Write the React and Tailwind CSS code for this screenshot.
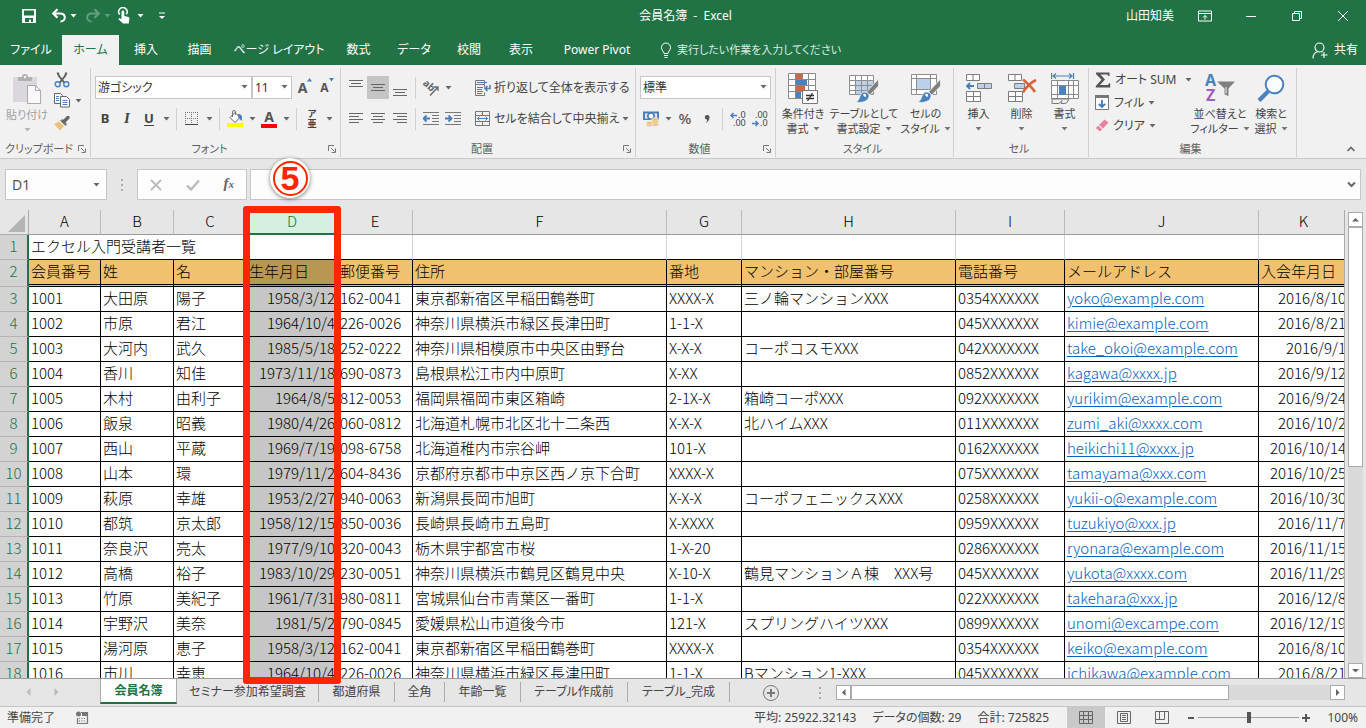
import React from "react";

const UI = "font-['Noto_Sans','Noto_Sans_CJK_JP',sans-serif] [font-feature-settings:'palt']";

/* ---------- small shared parts ---------- */

function Caret({ className = "text-[#666]" }) {
  return (
    <svg width="7" height="4" viewBox="0 0 7 4" className={className} aria-hidden="true">
      <path d="M0.5 0h6L3.5 3.5z" fill="currentColor" />
    </svg>
  );
}

function CaretButton({ label, className }) {
  return (
    <button type="button" aria-label={label} className="flex h-[23px] w-3 items-center justify-center">
      <Caret className={className} />
    </button>
  );
}

function Tool({ label, children, active }) {
  return (
    <button
      type="button"
      aria-label={label}
      className={`flex h-[23px] w-[22px] shrink-0 items-center justify-center ${active ? "bg-[#c5c5c5]" : ""}`}
    >
      {children}
    </button>
  );
}

function Sep() {
  return <div className="mx-1 h-[22px] w-px shrink-0 bg-[#d0d0d0]" />;
}

function Group({ title, launcher, width, children }) {
  return (
    <section aria-label={title} className={`flex shrink-0 flex-col border-r border-[#d0d0d0] ${width}`}>
      <div className="min-h-0 flex-1">{children}</div>
      <div className="flex h-4 items-center pr-1">
        <span className="flex-1 whitespace-nowrap text-center text-[11px] leading-4 text-[#5e5e5e]">{title}</span>
        {launcher && (
          <button type="button" aria-label={`${title}の設定`}>
            <svg width="8" height="8" viewBox="0 0 8 8" fill="none" stroke="#777">
              <path d="M0.5 6V0.5H6M3 3l3.5 3.5M7.5 3.5v4h-4" />
            </svg>
          </button>
        )}
      </div>
    </section>
  );
}

function DropSelect({ label, value, width }) {
  return (
    <div className={`relative flex h-[23px] ${width}`}>
      <select aria-label={label} defaultValue={value} className="w-full appearance-none border border-[#c6c6c6] bg-white pl-[2px] text-xs text-[#333]">
        <option>{value}</option>
      </select>
      <span className="pointer-events-none absolute right-1 top-[9px]">
        <Caret />
      </span>
    </div>
  );
}

function BigButton({ icon, lines, width, muted }) {
  return (
    <button type="button" className={`flex shrink-0 flex-col items-center text-[11px] leading-[15px] ${muted ? "text-[#a0a0a0]" : "text-[#444]"} ${width}`}>
      <span className="flex h-9 items-center">{icon}</span>
      <span className="whitespace-nowrap">{lines[0]}</span>
      <span className="flex h-[15px] items-center gap-1 whitespace-nowrap">
        {lines[1]}
        <Caret className={muted ? "text-[#b5b5b5]" : "text-[#777]"} />
      </span>
    </button>
  );
}

/* ---------- icons ---------- */

function Lines({ rows }) {
  return (
    <svg width="16" height="16" viewBox="0 0 16 16" stroke="#666">
      {rows.map(([y, a, b]) => (
        <path key={y} d={`M${a} ${y}.5H${b}`} />
      ))}
    </svg>
  );
}

const SaveIcon = () => (
  <svg width="16" height="16" viewBox="0 0 16 16">
    <path d="M1 1h14v14H1z" fill="#fff" />
    <path d="M3 2.500h10v5H3zM4 10h8v4H10v-2.500H8V14H4z" fill="#217346" />
  </svg>
);

const UndoIcon = ({ flip }) => (
  <svg width="16" height="16" viewBox="0 0 16 16" className={flip ? "-scale-x-100 opacity-30" : ""}>
    <path d="M2.500 5.500H9c3 0 4.800 1.700 4.800 4s-1.800 4-4.300 4" fill="none" stroke="#fff" strokeWidth="2" />
    <path d="M6.500 1.200L2.200 5.500l4.300 4.300" fill="none" stroke="#fff" strokeWidth="2.200" />
  </svg>
);

const TouchIcon = () => (
  <svg width="14" height="18" viewBox="0 0 14 18">
    <path d="M2.700 7.500A4.200 4.200 0 1 1 9.300 7.300" fill="none" stroke="#fff" strokeWidth="1.500" />
    <path d="M4.500 5a1.400 1.400 0 0 1 2.800 0v4l4.200 1c.8.2 1 .8.9 1.600l-.6 4.900H6L1.200 12c.7-1.100 1.800-1 3.300.2z" fill="#fff" />
  </svg>
);

const PasteIcon = () => (
  <svg width="30" height="32" viewBox="0 0 30 32">
    <path d="M1 4h24v25H1z" fill="#dcd7de" />
    <path d="M6 8V4h4a3 3 0 0 1 6 0h4v4z" fill="#b0b0b0" />
    <circle cx="13" cy="4" r="1.300" fill="#f1f1f1" />
    <path d="M15.500 12.500h8l5 5v13h-13z" fill="#fbf8fc" stroke="#aaa" />
    <path d="M23.500 12.500v5h5" fill="none" stroke="#aaa" />
  </svg>
);

const CutIcon = () => (
  <svg width="16" height="16" viewBox="0 0 16 16" fill="none">
    <path d="M3.500 0.500L5 4l5.500 7M12.500 0.500L11 4l-5.500 7" stroke="#606060" strokeWidth="2" />
    <circle cx="3.700" cy="12.300" r="2.500" stroke="#4a7ebb" strokeWidth="1.400" />
    <circle cx="12.300" cy="12.300" r="2.500" stroke="#4a7ebb" strokeWidth="1.400" />
  </svg>
);

const CopyIcon = () => (
  <svg width="16" height="15" viewBox="0 0 16 15" fill="#fff" stroke="#666">
    <path d="M0.500 0.500h6l2 2v8h-8z" />
    <path d="M6.500 3.500h6l3 3v7.500h-9z" />
    <path d="M2 3.500h3M2 5.500h3M2 7.500h3M8.500 7.500h5M8.500 9.500h5M8.500 11.500h5" stroke="#4a7ebb" />
  </svg>
);

const BrushIcon = () => (
  <svg width="16" height="15" viewBox="0 0 16 15">
    <path d="M0 8l5-2.500L10 10l-4 4.500z" fill="#ecc17c" />
    <path d="M6 4.500l5.500 5.500 1.500-2L8.500 3z" fill="#777" />
    <path d="M10 5.500L14 1.500" stroke="#666" strokeWidth="3.400" strokeLinecap="round" />
  </svg>
);

const BordersIcon = () => (
  <svg width="14" height="14" viewBox="0 0 14 14" fill="none" stroke="#777">
    <path d="M0.500 0v12M6.500 0v12M12.500 0v12M0 0.500h13M0 6.500h13" strokeDasharray="1 1" />
    <path d="M0 12.500h13" stroke="#444" />
  </svg>
);

const FillIcon = () => (
  <svg width="18" height="17" viewBox="0 0 18 17">
    <path d="M4 7.500L9 2.500l5 5-5 5z" fill="#fff" stroke="#666" />
    <path d="M6.500 7V2a1.500 1.500 0 0 1 3 0v3" fill="none" stroke="#777" />
    <path d="M12 4c3.500 0 5 2.500 3.500 7-1.500-1-2-3-3.500-4z" fill="#4a7ebb" />
    <path d="M1 13h16v4H1z" fill="#ff0" />
  </svg>
);

const FontColorIcon = () => (
  <span className="flex flex-col items-center">
    <span className="text-sm font-bold leading-[14px] text-[#555]">A</span>
    <span className="h-1 w-4 bg-[#f00]" />
  </span>
);

const GrowIcon = ({ down }) => (
  <span className="flex items-start">
    <span className={`font-bold text-[#555] ${down ? "text-xs" : "text-sm"} leading-5`}>A</span>
    <svg width="5" height="4" viewBox="0 0 5 4">
      <path d={down ? "M0 0h5L2.500 3.500z" : "M0 3.500h5L2.500 0z"} fill="#4a7ebb" />
    </svg>
  </span>
);

const OrientIcon = () => (
  <svg width="18" height="18" viewBox="0 0 18 18">
    <text x="0" y="8" transform="rotate(42 4 7)" fontSize="10" fontWeight="bold" fill="#666" fontFamily="Noto Sans, sans-serif">
      ab
    </text>
    <path d="M8 16.500L16 8M12 8h4v4" stroke="#666" strokeWidth="1.300" fill="none" />
  </svg>
);

const IndentIcon = ({ inc }) => (
  <svg width="16" height="14" viewBox="0 0 16 14" fill="none" stroke="#777">
    <path d="M0 0.500h16M9 3.500h7M9 6.500h7M9 9.500h7M0 12.500h16" />
    <path d={inc ? "M0 6.500h6M3.500 3.500l3 3-3 3" : "M1 6.500h6M3.500 3.500l-3 3 3 3"} stroke="#4a7ebb" strokeWidth="1.800" />
  </svg>
);

const WrapIcon = () => (
  <svg width="16" height="16" viewBox="0 0 16 16" fill="none" stroke="#777">
    <path d="M0.500 0.500h9v4h-9zM0.500 4.500v11h9v-3M9.500 4.500v3" />
    <path d="M2 2.500h10M2 7.500h6M2 9.500h5M2 11.500h6M2 13.500h5" stroke="#4a7ebb" />
    <path d="M15 5v3.500h-5M12.500 6l-2.500 2.500 2.500 2.500" stroke="#4a7ebb" strokeWidth="1.500" />
  </svg>
);

const MergeIcon = () => (
  <svg width="16" height="16" viewBox="0 0 16 16" fill="none" stroke="#777">
    <path d="M0.500 0.500h14v14h-14zM0.500 4.500h14M0.500 10.500h14M7.500 0.500v4M7.500 10.500v4" />
    <path d="M2.500 7.500h10M4.500 5.500l-2 2 2 2M10.500 5.500l2 2-2 2" stroke="#4a7ebb" />
  </svg>
);

const CurrencyIcon = () => (
  <svg width="16" height="16" viewBox="0 0 16 16">
    <path d="M0 0.500h16v8.500H0z" fill="#4a7ebb" />
    <path d="M2 2.500h3L3.500 5 5 7.500H2zM14 2.500h-3L12.500 5 11 7.500h3z" fill="#e8eef7" />
    <circle cx="8" cy="5" r="2.300" fill="#fff" />
    <g fill="#ecc17c" stroke="#f1f1f1" strokeWidth="0.600">
      <ellipse cx="12" cy="13.500" rx="3.700" ry="1.800" />
      <ellipse cx="12" cy="11" rx="3.700" ry="1.800" />
      <ellipse cx="12" cy="8.500" rx="3.700" ry="1.800" />
      <ellipse cx="6.500" cy="14" rx="3.300" ry="1.500" />
      <ellipse cx="6.500" cy="11.800" rx="3.300" ry="1.500" />
    </g>
  </svg>
);

const DecimalIcon = ({ dec }) => (
  <svg width="17" height="16" viewBox="0 0 17 16" fontSize="9" fill="#444" fontFamily="Noto Sans, sans-serif">
    <text x={dec ? 3 : 8} y="7">{dec ? ".00" : ".0"}</text>
    <text x={dec ? 8 : 3} y="15">{dec ? ".0" : ".00"}</text>
    <path
      d={dec ? "M0 12.500h6M3.500 10l2.500 2.500L3.500 15" : "M1 4.500h6M3.500 2L1 4.500 3.500 7"}
      fill="none"
      stroke="#4a7ebb"
      strokeWidth="1.500"
    />
  </svg>
);

const CondIcon = () => (
  <svg width="30" height="31" viewBox="0 0 30 31">
    <path d="M0.500 0.500h27v25h-27z" fill="#fff" />
    <path d="M8 1h6v6H8zM8 13h9v6H8z" fill="#d9623f" />
    <path d="M8 7h11v6H8zM8 19h5v6H8z" fill="#4a82bd" />
    <path d="M0.500 0.500h27v25h-27zM7.500 0.500v25M20.500 0.500v25M0.500 6.500h27M0.500 12.500h27M0.500 18.500h27M14.500 0.500v6" fill="none" stroke="#8a8a8a" />
    <path d="M14.500 17.500h15v13h-15z" fill="#fff" stroke="#777" />
    <path d="M18 22.500h8M18 25.500h8M24.500 20l-5 8" stroke="#333" strokeWidth="1.300" />
  </svg>
);

const Brush = () => (
  <g>
    <path d="M29.500 6v7L21 22l-3.500-3z" fill="#7f7f7f" stroke="#f1f1f1" strokeWidth="0.800" />
    <path d="M7 29c4-1.500 3-7 6.500-9.500 3-1.500 7 .5 6.500 4C19.500 28 13 30.500 7 29z" fill="#4a82bd" stroke="#f1f1f1" strokeWidth="0.800" />
    <path d="M14 21.500c1.500-1.500 3.500-.5 3 1.500-.5 1.500-2 1-3-1.500z" fill="#fff" />
  </g>
);

const TableFmtIcon = () => (
  <svg width="30" height="30" viewBox="0 0 30 30">
    <path d="M0.500 2.500h24v19h-24z" fill="#fff" />
    <path d="M7 8h17.500v13.500H7z" fill="#bdd0e9" />
    <path d="M0.500 2.500h24v19h-24zM6.500 2.500v19M12.500 2.500v19M18.500 2.500v19M0.500 7.500h24M0.500 12.500h24M0.500 17.500h24" fill="none" stroke="#8e8e8e" />
    <Brush />
  </svg>
);

const CellStyleIcon = () => (
  <svg width="30" height="30" viewBox="0 0 30 30">
    <path d="M0.500 1.500h25v20h-25z" fill="#fff" />
    <path d="M6 6h13v10H6z" fill="#bdd0e9" />
    <path d="M0.500 1.500h25v20h-25zM5.500 1.500v20M19.500 1.500v20M0.500 5.500h25M0.500 16.500h25" fill="none" stroke="#8e8e8e" />
    <Brush />
  </svg>
);

const InsertIcon = () => (
  <svg width="28" height="29" viewBox="0 0 28 29" fill="#fff" stroke="#7d7d7d">
    <path d="M1.500 0.500h13v6h-13zM8 0.500v6M1.500 17.500h14v10h-14zM8.500 17.500v10M1.500 22.500h14" />
    <path d="M12.500 9.500h14v5h-14zM19.500 9.500v5" fill="#bdd0e9" />
    <path d="M2 12h7M5 9l-3 3 3 3" fill="none" stroke="#4a7ebb" strokeWidth="1.800" />
  </svg>
);

const DeleteIcon = () => (
  <svg width="30" height="29" viewBox="0 0 30 29" fill="#fff" stroke="#7d7d7d">
    <path d="M1.500 0.500h13v6h-13zM8 0.500v6M1.500 17.500h14v10h-14zM8.500 17.500v10M1.500 22.500h14" />
    <path d="M7.500 9.500h10v5h-10z" fill="#bdd0e9" />
    <path d="M16 5.500C20 9 25 13 28 18M29 6C23 9 19 13 16 18.500" fill="none" stroke="#d9623f" strokeWidth="2.600" />
  </svg>
);

const FormatIcon = () => (
  <svg width="28" height="31" viewBox="0 0 28 31">
    <path d="M0.500 0v6M22.500 0v6M2 3h19M5 0.500L2 3l3 2.500M18 0.500L21 3l-3 2.500" fill="none" stroke="#4a7ebb" strokeWidth="1.200" />
    <path d="M0.500 7.500h27v18h-27z" fill="#fff" />
    <path d="M0.500 7.500h27v18h-27zM6.500 7.500v18M17.500 7.500v18M22.500 7.500v18M0.500 12.500h27M0.500 21.500h27" fill="none" stroke="#8a8a8a" />
    <path d="M8 13h7v9H8z" fill="#4a82bd" />
    <path d="M1 30.500V26h17l-2 3.500q-1 1-3 1h-3l1-3-2 2q-1 1-2 1z" fill="#f1f1f1" stroke="#777" />
  </svg>
);

const SumIcon = () => (
  <svg width="16" height="16" viewBox="0 0 16 16">
    <path d="M1 0.500h13.500V4h-1.200L12.500 2.500H5.500L10 7.500l-5 5.500h8l1-1.800h1.200V15.500H0.800V14l5.700-6.300L1 2z" fill="#555" />
  </svg>
);

const DownBoxIcon = () => (
  <svg width="15" height="16" viewBox="0 0 15 16">
    <path d="M0.500 0.500h13v14h-13z" fill="#fff" stroke="#777" />
    <path d="M0 0h14v3H0z" fill="#777" />
    <path d="M7 5v7M3.800 8.800L7 12l3.200-3.200" fill="none" stroke="#3c78bb" strokeWidth="1.800" />
  </svg>
);

const EraserIcon = () => (
  <svg width="14" height="13" viewBox="0 0 14 13">
    <path d="M4 6L9.500 0.500 13.500 3.500 8 9.500z" fill="#e8839b" />
    <path d="M3.200 6.800L7.200 10.300 5 12.500 0.800 9z" fill="#e8839b" />
  </svg>
);

const SortIcon = () => (
  <svg width="30" height="30" viewBox="0 0 30 30" fontWeight="bold" fontSize="16" fontFamily="Noto Sans, sans-serif">
    <text x="0" y="13" fill="#4a82bd">A</text>
    <text x="1" y="28" fill="#9a5fbf">Z</text>
    <path d="M12 8.500h18l-6.500 7v7.500l-4-1.500v-6z" fill="#808080" />
    <path d="M21 14v6.500" stroke="#f1f1f1" />
  </svg>
);

const FindIcon = () => (
  <svg width="28" height="29" viewBox="0 0 28 29" fill="none">
    <path d="M11 17.500L2 26.500" stroke="#4a82bd" strokeWidth="4.200" />
    <circle cx="17.500" cy="10.500" r="8.800" fill="#fcfcfc" stroke="#4a82bd" strokeWidth="2" />
  </svg>
);

/* ---------- window chrome ---------- */

function TitleBar() {
  return (
    <header className="flex h-[35px] shrink-0 items-center bg-[#217346] pb-1 text-xs text-white">
      <div className="flex flex-1 items-center pl-[21px]">
        <button type="button" aria-label="上書き保存"><SaveIcon /></button>
        <button type="button" aria-label="元に戻す" className="ml-[14px]"><UndoIcon /></button>
        <CaretButton label="元に戻す一覧" className="text-white" />
        <button type="button" aria-label="やり直し" className="ml-[6px]"><UndoIcon flip /></button>
        <CaretButton label="やり直し一覧" className="text-white/30" />
        <button type="button" aria-label="タッチ/マウス モード" className="ml-1"><TouchIcon /></button>
        <span className="ml-[3px] flex"><CaretButton label="モードの選択" className="text-white" /></span>
        <button type="button" aria-label="クイック アクセスのカスタマイズ" className="ml-3">
          <svg width="8" height="8" viewBox="0 0 8 8" fill="#fff"><path d="M1 0.500h6v1H1zM1 4h6L4 7z" /></svg>
        </button>
      </div>
      <h1>会員名簿&nbsp;&nbsp;-&nbsp;&nbsp;Excel</h1>
      <div className="flex flex-1 items-center justify-end gap-8 pr-4">
        <span className="-mr-2">山田知美</span>
        <button type="button" aria-label="リボンの表示オプション">
          <svg width="14" height="12" viewBox="0 0 14 12" fill="none" stroke="#fff"><path d="M0.500 1h13v10h-13zM0.500 3.500h13M7 9.500V5.500M5 7.500l2-2 2 2" /></svg>
        </button>
        <button type="button" aria-label="最小化">
          <svg width="14" height="12" viewBox="0 0 14 12" stroke="#fff"><path d="M2 6.500h10" /></svg>
        </button>
        <button type="button" aria-label="元に戻す(縮小)">
          <svg width="14" height="12" viewBox="0 0 14 12" fill="none" stroke="#fff"><path d="M2.500 3.500h7v7h-7zM4.500 3.500v-2h7v7h-2" /></svg>
        </button>
        <button type="button" aria-label="閉じる">
          <svg width="14" height="12" viewBox="0 0 14 12" stroke="#fff"><path d="M2 1l10 10M12 1L2 11" /></svg>
        </button>
      </div>
    </header>
  );
}

const TABS = [
  ["ファイル", "w-[62px]"],
  ["ホーム", "w-[57px]"],
  ["挿入", "w-[54px]"],
  ["描画", "w-[53px]"],
  ["ページ レイアウト", "w-[106px]"],
  ["数式", "w-[53px]"],
  ["データ", "w-[58px]"],
  ["校閲", "w-[52px]"],
  ["表示", "w-[52px]"],
  ["Power Pivot", "w-[100px]"],
];

function TabBar() {
  return (
    <nav className="flex h-[30px] shrink-0 items-stretch bg-[#217346] text-xs text-white">
      {TABS.map(([name, width]) => (
        <button key={name} type="button" className={`shrink-0 whitespace-nowrap ${width} ${name === "ホーム" ? "bg-[#f1f1f1] text-[#217346]" : ""}`}>
          {name}
        </button>
      ))}
      <button type="button" className="ml-3 flex items-center gap-1 whitespace-nowrap text-[11px] text-[#dcebe2]">
        <svg width="14" height="16" viewBox="0 0 14 16" fill="none" stroke="#fff">
          <path d="M5 11.500c0-2-2.500-3-2.500-6a4.500 4.500 0 0 1 9 0c0 3-2.500 4-2.500 6zM5 13.500h4M5.500 15.500h3" />
        </svg>
        実行したい作業を入力してください
      </button>
      <button type="button" className="ml-auto flex items-center gap-[6px] pr-2">
        <svg width="16" height="17" viewBox="0 0 16 17" fill="none" stroke="#fff" strokeWidth="1.100">
          <circle cx="7.500" cy="5.500" r="4.500" />
          <path d="M1 16.500c0-4 2-6 4.500-6.700M9.500 9.500l1 .8M12 10v6M9 13h6.500" />
        </svg>
        共有
      </button>
    </nav>
  );
}

function Ribbon() {
  return (
    <div className="flex h-[94px] shrink-0 border-b border-[#c8c8c8] bg-[#f1f1f1] pb-px pt-[3px]">
      <Group title="クリップボード" launcher width="w-[91px]">
        <div className="flex pl-[2px] pt-[3px]">
          <BigButton icon={<PasteIcon />} lines={["貼り付け", ""]} width="w-[50px]" muted />
          <div className="flex flex-col items-start pl-[2px]">
            <button type="button" aria-label="切り取り" className="flex h-[18px] items-center"><CutIcon /></button>
            <div className="flex items-center">
              <button type="button" aria-label="コピー" className="mr-[2px]"><CopyIcon /></button>
              <CaretButton label="コピーのオプション" />
            </div>
            <button type="button" aria-label="書式のコピー/貼り付け" className="flex h-[22px] items-center"><BrushIcon /></button>
          </div>
        </div>
      </Group>

      <Group title="フォント" launcher width="w-[250px]">
        <div className="flex flex-col gap-2 pl-[3px] pt-2">
          <div className="flex pl-px">
            <DropSelect label="フォント" value="游ゴシック" width="w-[157px]" />
            <DropSelect label="フォント サイズ" value="11" width="w-[40px]" />
            <span className="ml-[2px] flex">
              <Tool label="フォント サイズの拡大"><GrowIcon /></Tool>
              <Tool label="フォント サイズの縮小"><GrowIcon down /></Tool>
            </span>
          </div>
          <div className="flex items-center text-[13px] text-[#444]">
            <Tool label="太字"><b>B</b></Tool>
            <Tool label="斜体"><span className="font-['Liberation_Serif',serif] text-[15px] font-bold italic">I</span></Tool>
            <Tool label="下線"><b className="underline underline-offset-2">U</b></Tool>
            <CaretButton label="下線の種類" />
            <Sep />
            <Tool label="罫線"><BordersIcon /></Tool>
            <CaretButton label="罫線の種類" />
            <Sep />
            <Tool label="塗りつぶしの色"><FillIcon /></Tool>
            <CaretButton label="塗りつぶしの色の選択" />
            <Tool label="フォントの色"><FontColorIcon /></Tool>
            <CaretButton label="フォントの色の選択" />
            <Sep />
            <Tool label="ふりがなの表示/非表示">
              <span className="flex flex-col items-center text-[9px] font-bold leading-[10px]">
                <span>ア</span>
                <span>亜</span>
              </span>
            </Tool>
            <CaretButton label="ふりがなの設定" />
          </div>
        </div>
      </Group>

      <Group title="配置" launcher width="w-[295px]">
        <div className="flex pl-1 pt-2">
          <div className="flex flex-col gap-2">
            <div className="flex items-center">
              <Tool label="上揃え"><Lines rows={[[0, 1, 15], [3, 3, 13], [6, 1, 15]]} /></Tool>
              <Tool label="上下中央揃え" active><Lines rows={[[4, 1, 15], [7, 3, 13], [10, 1, 15]]} /></Tool>
              <Tool label="下揃え"><Lines rows={[[9, 1, 15], [12, 3, 13], [15, 1, 15]]} /></Tool>
              <Sep />
              <Tool label="方向"><OrientIcon /></Tool>
              <CaretButton label="方向の選択" />
            </div>
            <div className="flex items-center">
              <Tool label="左揃え"><Lines rows={[[2, 1, 15], [5, 1, 11], [8, 1, 15], [11, 1, 11]]} /></Tool>
              <Tool label="中央揃え"><Lines rows={[[2, 1, 15], [5, 3, 13], [8, 1, 15], [11, 3, 13]]} /></Tool>
              <Tool label="右揃え"><Lines rows={[[2, 1, 15], [5, 5, 15], [8, 1, 15], [11, 5, 15]]} /></Tool>
              <Sep />
              <Tool label="インデントを減らす"><IndentIcon /></Tool>
              <Tool label="インデントを増やす"><IndentIcon inc /></Tool>
            </div>
          </div>
          <div className="mx-1 w-px bg-[#d8d8d8]" />
          <div className="flex flex-1 flex-col gap-2 pl-[3px] pr-[6px] text-xs text-[#444]">
            <button type="button" className="flex h-[23px] items-center gap-[3px] whitespace-nowrap"><WrapIcon />折り返して全体を表示する</button>
            <div className="flex items-center justify-between">
              <button type="button" className="flex h-[23px] items-center gap-[3px] whitespace-nowrap"><MergeIcon />セルを結合して中央揃え</button>
              <CaretButton label="結合の種類" />
            </div>
          </div>
        </div>
      </Group>

      <Group title="数値" launcher width="w-[140px]">
        <div className="flex flex-col gap-2 pl-1 pt-2 text-[#555]">
          <DropSelect label="表示形式" value="標準" width="w-[131px]" />
          <div className="flex items-center">
            <Tool label="通貨表示形式"><CurrencyIcon /></Tool>
            <CaretButton label="通貨の選択" />
            <Tool label="パーセント スタイル"><span className="text-[15px] font-medium">%</span></Tool>
            <Tool label="桁区切りスタイル">
              <svg width="8" height="12" viewBox="0 0 8 12"><path d="M4 2a2.300 2.300 0 0 1 2.500 2.500C6.500 7 5 9 2.500 10 4 8.500 4.300 7.500 4 6.500A2.200 2.200 0 0 1 4 2z" fill="#555" /></svg>
            </Tool>
            <Sep />
            <Tool label="小数点以下の表示桁数を増やす"><DecimalIcon /></Tool>
            <Tool label="小数点以下の表示桁数を減らす"><DecimalIcon dec /></Tool>
          </div>
        </div>
      </Group>

      <Group title="スタイル" width="w-[178px]">
        <div className="flex pt-[2px]">
          <BigButton icon={<CondIcon />} lines={["条件付き", "書式"]} width="w-[54px]" />
          <BigButton icon={<TableFmtIcon />} lines={["テーブルとして", "書式設定"]} width="w-[68px]" />
          <BigButton icon={<CellStyleIcon />} lines={["セルの", "スタイル"]} width="w-[55px]" />
        </div>
      </Group>

      <Group title="セル" width="w-[135px]">
        <div className="flex pl-[3px] pt-[2px]">
          <BigButton icon={<InsertIcon />} lines={["挿入", ""]} width="w-[43px]" />
          <BigButton icon={<DeleteIcon />} lines={["削除", ""]} width="w-[43px]" />
          <BigButton icon={<FormatIcon />} lines={["書式", ""]} width="w-[43px]" />
        </div>
      </Group>

      <Group title="編集" width="w-[208px]">
        <div className="flex pl-[6px] text-xs text-[#444]">
          <div className="flex w-[100px] flex-col">
            <div className="flex items-center justify-between">
              <button type="button" className="flex h-[23px] items-center gap-1 whitespace-nowrap"><SumIcon />オート SUM</button>
              <CaretButton label="関数の選択" />
            </div>
            <button type="button" className="flex h-[23px] items-center gap-1"><DownBoxIcon />フィル<Caret /></button>
            <button type="button" className="flex h-[23px] items-center gap-1"><EraserIcon />クリア<Caret /></button>
          </div>
          <div className="flex pt-[2px]">
            <BigButton icon={<SortIcon />} lines={["並べ替えと", "フィルター"]} width="w-[52px]" />
            <BigButton icon={<FindIcon />} lines={["検索と", "選択"]} width="w-[50px]" />
          </div>
        </div>
      </Group>

      <button type="button" aria-label="リボンを折りたたむ" className="ml-auto mr-[10px] flex h-4 items-center self-end">
        <svg width="10" height="8" viewBox="0 0 10 8" fill="none" stroke="#666" strokeWidth="1.600"><path d="M1.500 6L5 2.500 8.500 6" /></svg>
      </button>
    </div>
  );
}

function FormulaBar() {
  return (
    <div className="flex h-[51px] shrink-0 items-start bg-[#e6e6e6] pl-[5px] pr-[5px] pt-[10px] text-[#777]">
      <div className="flex h-[31px] w-[102px] items-center border border-[#c6c6c6] bg-[#fdfdfd]">
        <input aria-label="名前ボックス" defaultValue="D1" className="w-0 flex-1 bg-transparent pl-[6px] text-sm text-[#555] outline-none" />
        <CaretButton label="名前の一覧" />
        <span className="w-1" />
      </div>
      <div className="flex h-[31px] w-[30px] flex-col items-center justify-center gap-[3px]">
        <i className="size-[2px] bg-[#aaa]" />
        <i className="size-[2px] bg-[#aaa]" />
        <i className="size-[2px] bg-[#aaa]" />
      </div>
      <div className="flex h-[31px] w-[110px] items-center justify-around border border-[#c6c6c6] bg-[#fdfdfd]">
        <button type="button" aria-label="キャンセル">
          <svg width="12" height="12" viewBox="0 0 12 12" stroke="#bbb" strokeWidth="1.800"><path d="M1 1l10 10M11 1L1 11" /></svg>
        </button>
        <button type="button" aria-label="入力">
          <svg width="14" height="12" viewBox="0 0 14 12" fill="none" stroke="#bbb" strokeWidth="2.400"><path d="M1 6.500l4 4L13 1.500" /></svg>
        </button>
        <button type="button" aria-label="関数の挿入" className="pb-[2px] font-['Liberation_Serif',serif] text-[15px] font-bold italic leading-5 text-[#666]">
          f<span className="text-[11px]">x</span>
        </button>
      </div>
      <div className="ml-[3px] flex h-[31px] flex-1 items-center border border-[#c6c6c6] bg-[#fdfdfd] pr-1">
        <input aria-label="数式バー" className="w-0 flex-1 bg-transparent px-2 text-sm outline-none" />
        <button type="button" aria-label="数式バーの展開">
          <svg width="9" height="7" viewBox="0 0 9 7" fill="none" stroke="#666" strokeWidth="2"><path d="M1 1.500l3.500 3.500L8 1.500" /></svg>
        </button>
      </div>
    </div>
  );
}

/* ---------- worksheet ---------- */

const COLS = ["A", "B", "C", "D", "E", "F", "G", "H", "I", "J", "K"];
const HEADS = ["会員番号", "姓", "名", "生年月日", "郵便番号", "住所", "番地", "マンション・部屋番号", "電話番号", "メールアドレス", "入会年月日"];
const ROWS = [
  ["1001", "大田原", "陽子", "1958/3/12", "162-0041", "東京都新宿区早稲田鶴巻町", "XXXX-X", "三ノ輪マンションXXX", "0354XXXXXX", "yoko@example.com", "2016/8/10"],
  ["1002", "市原", "君江", "1964/10/4", "226-0026", "神奈川県横浜市緑区長津田町", "1-1-X", "", "045XXXXXXX", "kimie@example.com", "2016/8/21"],
  ["1003", "大河内", "武久", "1985/5/18", "252-0222", "神奈川県相模原市中央区由野台", "X-X-X", "コーポコスモXXX", "042XXXXXXX", "take_okoi@example.com", "2016/9/1"],
  ["1004", "香川", "知佳", "1973/11/18", "690-0873", "島根県松江市内中原町", "X-XX", "", "0852XXXXXX", "kagawa@xxxx.jp", "2016/9/12"],
  ["1005", "木村", "由利子", "1964/8/5", "812-0053", "福岡県福岡市東区箱崎", "2-1X-X", "箱崎コーポXXX", "092XXXXXXX", "yurikim@example.com", "2016/9/24"],
  ["1006", "飯泉", "昭義", "1980/4/26", "060-0812", "北海道札幌市北区北十二条西", "X-X-X", "北ハイムXXX", "011XXXXXXX", "zumi_aki@xxxx.com", "2016/10/2"],
  ["1007", "西山", "平蔵", "1969/7/19", "098-6758", "北海道稚内市宗谷岬", "101-X", "", "0162XXXXXX", "heikichi11@xxxx.jp", "2016/10/14"],
  ["1008", "山本", "環", "1979/11/2", "604-8436", "京都府京都市中京区西ノ京下合町", "XXXX-X", "", "075XXXXXXX", "tamayama@xxx.com", "2016/10/25"],
  ["1009", "萩原", "幸雄", "1953/2/27", "940-0063", "新潟県長岡市旭町", "X-X-X", "コーポフェニックスXXX", "0258XXXXXX", "yukii-o@example.com", "2016/10/30"],
  ["1010", "都筑", "京太郎", "1958/12/15", "850-0036", "長崎県長崎市五島町", "X-XXXX", "", "0959XXXXXX", "tuzukiyo@xxx.jp", "2016/11/7"],
  ["1011", "奈良沢", "亮太", "1977/9/10", "320-0043", "栃木県宇都宮市桜", "1-X-20", "", "0286XXXXXX", "ryonara@example.com", "2016/11/15"],
  ["1012", "高橋", "裕子", "1983/10/29", "230-0051", "神奈川県横浜市鶴見区鶴見中央", "X-10-X", "鶴見マンションＡ棟　XXX号", "045XXXXXXX", "yukota@xxxx.com", "2016/11/29"],
  ["1013", "竹原", "美紀子", "1961/7/31", "980-0811", "宮城県仙台市青葉区一番町", "1-1-X", "", "022XXXXXXX", "takehara@xxx.jp", "2016/12/8"],
  ["1014", "宇野沢", "美奈", "1981/5/2", "790-0845", "愛媛県松山市道後今市", "121-X", "スプリングハイツXXX", "0899XXXXXX", "unomi@excampe.com", "2016/12/19"],
  ["1015", "湯河原", "恵子", "1958/3/12", "162-0041", "東京都新宿区早稲田鶴巻町", "XXXX-X", "", "0354XXXXXX", "keiko@example.com", "2016/8/10"],
  ["1016", "市川", "幸恵", "1964/10/4", "226-0026", "神奈川県横浜市緑区長津田町", "1-1-X", "Bマンション1-XXX", "045XXXXXXX", "ichikawa@example.com", "2016/8/21"],
];

function RowHead({ n }) {
  return (
    <th scope="row" className="border-b border-r-2 border-b-[#b4b4b4] border-r-[#217346] bg-[#d3d3d3] p-0 align-top font-light text-[#217346]">
      {n}
    </th>
  );
}

function Sheet() {
  return (
    <table className="w-[1349px] table-fixed border-separate border-spacing-0 bg-white font-['Noto_Sans_CJK_JP',sans-serif] text-[15px] font-light leading-[21px] text-black [font-feature-settings:normal]">
      <colgroup>
        <col className="w-[29px]" />
        <col className="w-[72px]" />
        <col className="w-[73px]" />
        <col className="w-[73px]" />
        <col className="w-[91px]" />
        <col className="w-[75px]" />
        <col className="w-[254px]" />
        <col className="w-[75px]" />
        <col className="w-[214px]" />
        <col className="w-[109px]" />
        <col className="w-[194px]" />
        <col />
      </colgroup>
      <thead>
        <tr className="h-[25px] bg-[#e6e6e6]">
          <td className="border-b border-r border-[#ababab] p-0">
            <svg width="26" height="23" viewBox="0 0 26 23" className="block">
              <path d="M25 4v17H8z" fill="#b4b4b4" />
            </svg>
          </td>
          {COLS.map((c) => (
            <th
              key={c}
              scope="col"
              className={`border-r border-r-[#bababa] p-0 align-top font-light ${
                c === "D" ? "border-b-2 border-b-[#217346] bg-[#d3f0e0] text-[#217346]" : "border-b border-b-[#9b9b9b]"
              }`}
            >
              {c}
            </th>
          ))}
        </tr>
      </thead>
      <tbody>
        <tr className="h-[25px]">
          <RowHead n={1} />
          <td colSpan={3} className="border-b border-black p-0 pl-[2px] align-top">エクセル入門受講者一覧</td>
          {COLS.slice(3).map((c) => (
            <td key={c} className="border-b border-r border-b-black border-r-[#d4d4d4] p-0" />
          ))}
        </tr>
        <tr className="h-[27px]">
          <RowHead n={2} />
          {HEADS.map((h, i) => (
            <td
              key={h}
              className={`whitespace-nowrap border-b-[3px] border-r border-b-black border-r-black p-0 pl-[2px] align-top [border-bottom-style:double] ${
                i === 3 ? "bg-[#b89752]" : "bg-[#f0c16e]"
              }`}
            >
              {h}
            </td>
          ))}
        </tr>
        {ROWS.map((r, n) => (
          <tr key={r[0]} className="h-[25px]">
            <RowHead n={n + 3} />
            {r.map((v, i) => (
              <td
                key={i}
                className={`whitespace-nowrap border-b border-r border-black p-0 px-[2px] align-top ${i === 3 ? "bg-[#c6c6c6]" : ""} ${
                  i === 3 || i === 10 ? "text-right" : ""
                }`}
              >
                {i === 9 ? (
                  <a href={`mailto:${v}`} className="text-[#0563c1] underline underline-offset-2">{v}</a>
                ) : (
                  v
                )}
              </td>
            ))}
          </tr>
        ))}
      </tbody>
    </table>
  );
}

function ScrollArrow({ d, label }) {
  return (
    <button type="button" aria-label={label} className="flex size-[15px] shrink-0 items-center justify-center border border-[#ababab] bg-white">
      <svg width="7" height="7" viewBox="0 0 7 7" fill="#666"><path d={d} /></svg>
    </button>
  );
}

function Worksheet() {
  return (
    <main className="relative flex min-h-0 flex-1 bg-[#e6e6e6]">
      <div className="min-w-0 flex-1 overflow-hidden border-r border-[#ababab]">
        <Sheet />
      </div>
      <div className="flex w-[21px] shrink-0 flex-col pl-[3px] pt-[2px]">
        <ScrollArrow label="上へスクロール" d="M0 5.500h7L3.500 2z" />
        <div className="w-[15px] flex-1 bg-[#dadada]">
          <div className="h-[55%] border border-[#ababab] bg-white" />
        </div>
        <ScrollArrow label="下へスクロール" d="M0 2h7L3.500 5.500z" />
      </div>
      <div className="absolute -bottom-[6px] -top-1 left-[243px] w-[98px] rounded-[3px] border-[7px] border-[#fe2600]" />
      <div className="absolute -top-[52px] left-[270px] flex size-10 items-center justify-center rounded-full bg-white shadow-[0_1px_4px_rgba(0,0,0,0.5)]">
        <span className="flex size-[35px] items-center justify-center rounded-full border-2 border-[#fe2600] font-['Liberation_Sans',sans-serif] text-[34px] font-bold leading-none text-[#fe2600]">
          5
        </span>
      </div>
    </main>
  );
}

const SHEETS = [
  ["セミナー参加希望調査", "w-[142px]"],
  ["都道府県", "w-[76px]"],
  ["全角", "w-[50px]"],
  ["年齢一覧", "w-[76px]"],
  ["テーブル作成前", "w-[107px]"],
  ["テーブル_完成", "w-[102px]"],
];

function SheetTabs() {
  return (
    <div className="flex h-[29px] shrink-0 items-start border-b border-t border-b-[#c6c6c6] border-t-[#9b9b9b] bg-[#e6e6e6] text-xs text-[#444]">
      <div className="flex h-[25px] w-[100px] shrink-0 items-center gap-[23px] pl-[26px]">
        <button type="button" aria-label="前のシート"><svg width="5" height="8" viewBox="0 0 5 8" fill="#bbb"><path d="M4.500 0v8L0.500 4z" /></svg></button>
        <button type="button" aria-label="次のシート"><svg width="5" height="8" viewBox="0 0 5 8" fill="#bbb"><path d="M0.500 0v8l4-4z" /></svg></button>
      </div>
      <button type="button" className="h-[25px] w-[77px] shrink-0 border-x border-b-2 border-x-[#ababab] border-b-[#217346] bg-white font-bold text-[#217346]">
        会員名簿
      </button>
      {SHEETS.map(([name, width]) => (
        <button key={name} type="button" className={`mt-[3px] h-5 shrink-0 whitespace-nowrap border-r border-[#ababab] ${width}`}>
          {name}
        </button>
      ))}
      <button type="button" aria-label="新しいシート" className="ml-8 mt-[5px]">
        <svg width="18" height="18" viewBox="0 0 18 18" fill="none" stroke="#777"><circle cx="9" cy="9" r="7.500" /><path d="M9 5v8M5 9h8" strokeWidth="2" /></svg>
      </button>
      <div className="ml-auto flex h-[27px] w-[551px] items-center">
        <div className="flex w-[21px] flex-col gap-[3px] pl-1">
          <i className="size-[2px] bg-[#aaa]" />
          <i className="size-[2px] bg-[#aaa]" />
          <i className="size-[2px] bg-[#aaa]" />
        </div>
        <ScrollArrow label="左へスクロール" d="M5.500 0v7L2 3.500z" />
        <div className="h-[15px] flex-1 bg-[#dadada]">
          <div className="h-full w-[79%] border border-[#ababab] bg-white" />
        </div>
        <ScrollArrow label="右へスクロール" d="M2 0v7l3.500-3.500z" />
        <div className="w-[21px]" />
      </div>
    </div>
  );
}

function StatusBar() {
  return (
    <footer className="flex h-[21px] shrink-0 items-center bg-[#f1f1f1] pl-[7px] text-xs text-[#444]">
      <span>準備完了</span>
      <button type="button" aria-label="マクロの記録" className="ml-5">
        <svg width="14" height="13" viewBox="0 0 14 13" fill="none" stroke="#777">
          <path d="M6 1.500h6.500v11h-10V7M4.500 7v1M4.500 9.500v1M7 7v1M7 9.500v1M9.500 7v1M9.500 9.500v1M7 4.500h5" strokeWidth="1.200" />
          <path d="M7 1h6v3H7z" fill="#777" stroke="none" />
          <circle cx="3.500" cy="3" r="2.500" fill="#777" stroke="none" />
        </svg>
      </button>
      <div className="ml-auto flex items-center gap-4 pr-[18px]">
        <span>平均: 25922.32143</span>
        <span>データの個数: 29</span>
        <span>合計: 725825</span>
      </div>
      <button type="button" aria-label="標準表示" className="flex h-full w-[38px] items-center justify-center bg-[#c9c9c9]">
        <svg width="14" height="14" viewBox="0 0 14 14" fill="none" stroke="#666"><path d="M0.500 0.500h13v12h-13zM4.500 0.500v12M9.500 0.500v12M0.500 4.500h13M0.500 8.500h13" /></svg>
      </button>
      <button type="button" aria-label="ページ レイアウト表示" className="flex h-full w-[38px] items-center justify-center">
        <svg width="14" height="14" viewBox="0 0 14 14" fill="none" stroke="#666"><path d="M0.500 0.500h13v12h-13zM3.500 2.500h7v8h-7zM5 4.500h4M5 6.500h4M5 8.500h4" /></svg>
      </button>
      <button type="button" aria-label="改ページ プレビュー" className="flex h-full w-[38px] items-center justify-center">
        <svg width="14" height="14" viewBox="0 0 14 14" fill="none" stroke="#666"><path d="M0.500 0.500h13v12h-13zM4.500 0.500v8M9.500 0.500v8M0.500 8.500h9" /></svg>
      </button>
      <button type="button" aria-label="縮小" className="ml-1 flex w-3 justify-center">
        <svg width="8" height="8" viewBox="0 0 8 8" stroke="#555" strokeWidth="2"><path d="M1 4h6" /></svg>
      </button>
      <input
        type="range"
        aria-label="ズーム"
        min="0"
        max="100"
        defaultValue="50"
        className="mx-px h-3 w-[101px] appearance-none bg-transparent [&::-webkit-slider-runnable-track]:h-px [&::-webkit-slider-runnable-track]:bg-[#a0a0a0] [&::-webkit-slider-thumb]:-mt-[5px] [&::-webkit-slider-thumb]:h-[11px] [&::-webkit-slider-thumb]:w-1 [&::-webkit-slider-thumb]:appearance-none [&::-webkit-slider-thumb]:bg-[#555]"
      />
      <button type="button" aria-label="拡大" className="flex w-3 justify-center">
        <svg width="8" height="8" viewBox="0 0 8 8" stroke="#555" strokeWidth="2"><path d="M0 4h8M4 0v8" /></svg>
      </button>
      <span className="w-[54px] pr-2 text-right">100%</span>
    </footer>
  );
}

export default function App() {
  return (
    <div className={`flex h-screen flex-col overflow-hidden ${UI}`}>
      <TitleBar />
      <TabBar />
      <Ribbon />
      <FormulaBar />
      <Worksheet />
      <SheetTabs />
      <StatusBar />
    </div>
  );
}
